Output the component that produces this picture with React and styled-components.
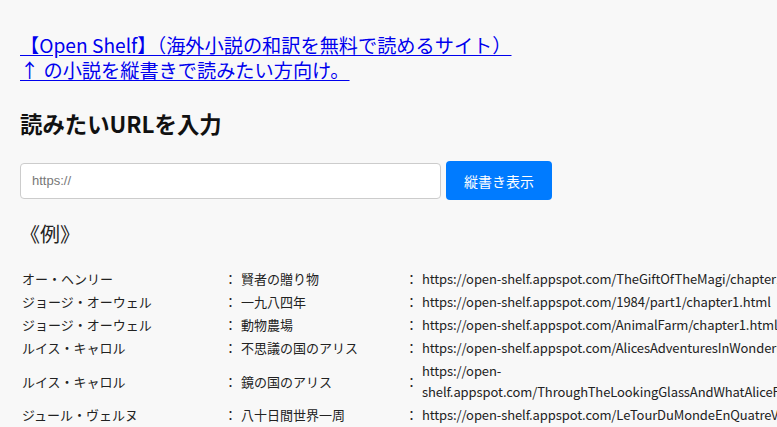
import React from "react";
import styled, { createGlobalStyle } from "styled-components";

const Global = createGlobalStyle`
  html, body { margin: 0; padding: 0; background: #f8f8f8; }
  body { font-family: "Noto Sans CJK JP", "Noto Sans", sans-serif; color: #222; }
`;

const Page = styled.div`
  overflow: hidden;
  padding: 33px 20px 0 20px;
  min-height: 427px;
  box-sizing: border-box;
`;

const Intro = styled.p`
  margin: 0;
  font-size: 19.2px;
  line-height: 25px;
`;

const IntroLink = styled.a`
  color: #0000ee;
  text-decoration: underline;
  text-underline-offset: 2px;
`;

const Heading = styled.h2`
  margin: 27px 0 0 0;
  font-size: 22.4px;
  line-height: 27px;
  font-weight: 700;
  color: #111;
`;

const Form = styled.form`
  display: flex;
  align-items: center;
  gap: 5px;
  margin-top: 24px;
  height: 39px;
`;

const UrlInput = styled.input`
  box-sizing: border-box;
  width: 421px;
  height: 36px;
  padding: 0 11px;
  border: 1px solid #ccc;
  border-radius: 4px;
  background: #fff;
  font-family: "Liberation Sans", Arial, sans-serif;
  font-size: 13px;
  outline: none;
  &::placeholder { color: #777; }
`;

const SubmitButton = styled.button`
  box-sizing: border-box;
  width: 106px;
  height: 39px;
  border: none;
  border-radius: 4px;
  background: #007bff;
  color: #fff;
  font-family: "Noto Sans CJK JP", sans-serif;
  font-size: 14px;
  cursor: pointer;
`;

const ExampleTitle = styled.div`
  margin-top: 21px;
  font-size: 20px;
  line-height: 25px;
  color: #222;
`;

const Table = styled.table`
  margin-top: 21px;
  border-collapse: collapse;
  table-layout: fixed;
  width: 957px;
  font-size: 13px;
  line-height: 21px;
  color: #222;
`;

const Cell = styled.td`
  padding: 1px 0 1px ${(p) => p.$pl || 0}px;
  vertical-align: middle;
  text-align: ${(p) => (p.$center ? "center" : "left")};
  letter-spacing: ${(p) => (p.$url ? "-0.1px" : "0")};
`;

const rows = [
  ["オー・ヘンリー", "賢者の贈り物", "https://open-shelf.appspot.com/TheGiftOfTheMagi/chapter1.html"],
  ["ジョージ・オーウェル", "一九八四年", "https://open-shelf.appspot.com/1984/part1/chapter1.html"],
  ["ジョージ・オーウェル", "動物農場", "https://open-shelf.appspot.com/AnimalFarm/chapter1.html"],
  ["ルイス・キャロル", "不思議の国のアリス", "https://open-shelf.appspot.com/AlicesAdventuresInWonderland/chapter1.html"],
  ["ルイス・キャロル", "鏡の国のアリス", "https://open-shelf.appspot.com/ThroughTheLookingGlassAndWhatAliceFoundThere/chapter1.html"],
  ["ジュール・ヴェルヌ", "八十日間世界一周", "https://open-shelf.appspot.com/LeTourDuMondeEnQuatreVingtsJours/chapter1.html"],
];

export default function App() {
  return (
    <>
      <Global />
      <Page>
        <Intro>
          <IntroLink href="#">
            【Open Shelf】（海外小説の和訳を無料で読めるサイト）
            <br />
            ↑ の小説を縦書きで読みたい方向け。
          </IntroLink>
        </Intro>
        <Heading>読みたいURLを入力</Heading>
        <Form onSubmit={(e) => e.preventDefault()}>
          <UrlInput type="text" placeholder="https://" />
          <SubmitButton type="submit">縦書き表示</SubmitButton>
        </Form>
        <ExampleTitle>《例》</ExampleTitle>
        <Table>
          <colgroup>
            <col style={{ width: 204 }} />
            <col style={{ width: 13 }} />
            <col style={{ width: 168 }} />
            <col style={{ width: 13 }} />
            <col style={{ width: 559 }} />
          </colgroup>
          <tbody>
            {rows.map(([author, title, url], i) => (
              <tr key={i}>
                <Cell $pl={2}>{author}</Cell>
                <Cell $center>：</Cell>
                <Cell $pl={4}>{title}</Cell>
                <Cell $center>：</Cell>
                <Cell $pl={4} $url>{url}</Cell>
              </tr>
            ))}
          </tbody>
        </Table>
      </Page>
    </>
  );
}
